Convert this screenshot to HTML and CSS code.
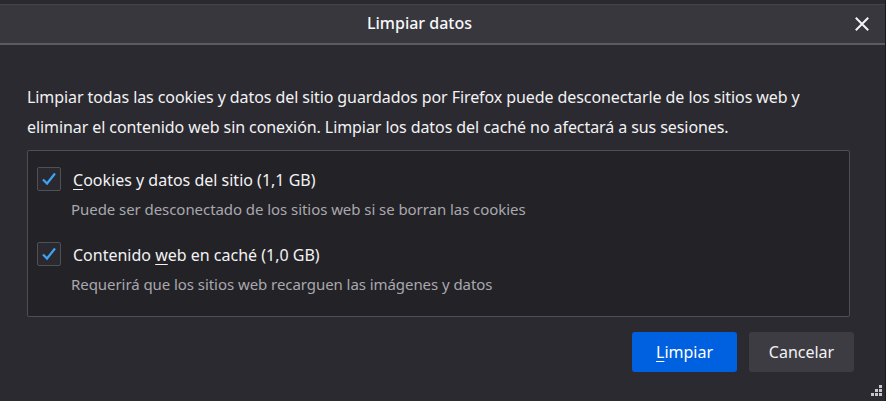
FILE: index.html
```html
<!DOCTYPE html>
<html lang="es">
<head>
<meta charset="utf-8">
<link rel="stylesheet" href="styles.css">
</head>
<body>
<div class="dialog">
  <div class="topstrip"></div>
  <header class="titlebar">
    <span class="title">Limpiar datos</span>
    <span class="close">
      <svg width="14" height="14" viewBox="0 0 14 14"><path d="M1.5 1.5 L12.5 12.5 M12.5 1.5 L1.5 12.5" stroke="#f4f4f6" stroke-width="2" stroke-linecap="square"/></svg>
    </span>
  </header>
  <main class="content">
    <p class="intro">Limpiar todas las cookies y datos del sitio guardados por Firefox puede desconectarle de los sitios web y eliminar el contenido web sin conexión. Limpiar los datos del caché no afectará a sus sesiones.</p>
    <div class="options">
      <div class="option">
        <div class="row">
          <span class="check"><svg width="16" height="14" viewBox="0 0 16 14"><path d="M2 7.5 L6 11.5 L14 1.5" fill="none" stroke="#3ea2f5" stroke-width="2.2"/></svg></span>
          <span class="label"><u>C</u>ookies y datos del sitio (1,1 GB)</span>
        </div>
        <div class="desc">Puede ser desconectado de los sitios web si se borran las cookies</div>
      </div>
      <div class="option">
        <div class="row">
          <span class="check"><svg width="16" height="14" viewBox="0 0 16 14"><path d="M2 7.5 L6 11.5 L14 1.5" fill="none" stroke="#3ea2f5" stroke-width="2.2"/></svg></span>
          <span class="label">Contenido <u>w</u>eb en caché (1,0 GB)</span>
        </div>
        <div class="desc">Requerirá que los sitios web recarguen las imágenes y datos</div>
      </div>
    </div>
    <div class="buttons">
      <button class="btn primary"><u>L</u>impiar</button>
      <button class="btn">Cancelar</button>
    </div>
  </main>
  <span class="grip">
    <svg width="11" height="11" viewBox="0 0 11 11" fill="#c8c8cc"><rect x="8" y="0" width="3" height="3"/><rect x="4" y="4" width="3" height="3"/><rect x="8" y="4" width="3" height="3"/><rect x="0" y="8" width="3" height="3"/><rect x="4" y="8" width="3" height="3"/><rect x="8" y="8" width="3" height="3"/></svg>
  </span>
</div>
</body>
</html>
```
FILE: styles.css
```css
* { box-sizing: border-box; }
html, body {
  margin: 0;
  padding: 0;
  background: #2b2a30;
}
body {
  font-family: "Noto Sans", "Open Sans", sans-serif;
  color: #f2f2f4;
}
.dialog {
  position: relative;
  width: 886px;
  height: 401px;
  background: #2b2a30;
  border-right: 1px solid #1c1b20;
  overflow: hidden;
}
.topstrip {
  height: 5px;
  background: #2a292f;
  border-bottom: 1px solid #44434a;
}
.titlebar {
  height: 40px;
  background: #38373d;
  border-bottom: 2px solid #5c5b62;
  display: flex;
  align-items: center;
  justify-content: center;
  padding-right: 46px;
  padding-bottom: 2px;
  position: relative;
}
.title {
  font-size: 16px;
  font-weight: 500;
  color: #f7f7f9;
}
.close {
  position: absolute;
  right: 16px;
  top: 12px;
  width: 14px;
  height: 14px;
  display: flex;
}
.content {
  padding: 37px 0 0 27px;
}
.intro {
  margin: 0;
  width: 830px;
  font-size: 16px;
  line-height: 30px;
  color: #f2f2f4;
  letter-spacing: -0.08px;
}
.options {
  margin-top: 8px;
  width: 823px;
  height: 167px;
  border: 1px solid #4f4e55;
  border-radius: 2px;
  background: #232227;
  padding: 16px 0 0 9px;
}
.option {
  height: 74.5px;
}
.row {
  display: flex;
  align-items: center;
  gap: 12px;
}
.check {
  width: 24px;
  height: 24px;
  border: 1px solid #505057;
  border-radius: 2px;
  background: #2a2930;
  display: flex;
  align-items: center;
  justify-content: center;
}
.label {
  font-size: 16px;
  color: #f2f2f4;
  position: relative;
  top: 1px;
}
.label u { text-underline-offset: 3px; }
.desc {
  margin-top: 8px;
  margin-left: 34px;
  font-size: 15px;
  color: #a9a8ae;
  letter-spacing: -0.06px;
}
.buttons {
  margin-top: 15px;
  width: 827px;
  display: flex;
  justify-content: flex-end;
  gap: 12px;
}
.btn {
  width: 105px;
  height: 40px;
  border: none;
  border-radius: 3px;
  font-family: inherit;
  font-size: 16px;
  color: #f2f2f4;
  background: #3d3c42;
}
.btn.primary {
  background: #0061e0;
  color: #ffffff;
}
.btn u { text-underline-offset: 3px; }
.grip {
  position: absolute;
  right: 3px;
  bottom: 5px;
  width: 11px;
  height: 11px;
  display: flex;
}
```
